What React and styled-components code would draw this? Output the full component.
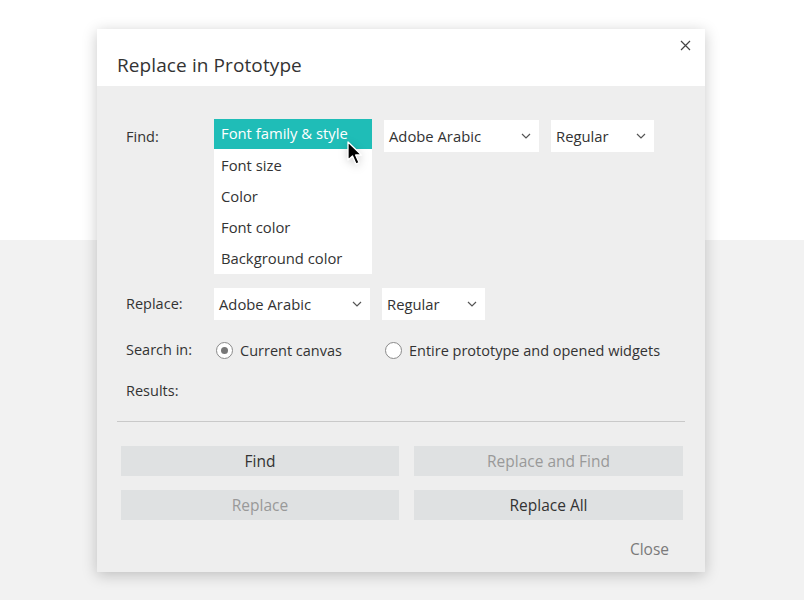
import React from "react";
import styled, { createGlobalStyle } from "styled-components";

const GlobalStyle = createGlobalStyle`
  html, body {
    margin: 0;
    padding: 0;
  }
  body {
    font-family: "Open Sans", "Liberation Sans", sans-serif;
    color: #333;
    background: linear-gradient(to bottom, #fff 0, #fff 240px, #f2f2f2 240px);
    min-height: 600px;
  }
`;

const Page = styled.div`
  width: 804px;
  height: 600px;
  display: flex;
  justify-content: flex-start;
  padding: 29px 0 0 97px;
  box-sizing: border-box;
`;

const Dialog = styled.div`
  width: 608px;
  height: 543px;
  background: #eeeeee;
  box-shadow: 0 3px 14px rgba(0, 0, 0, 0.22);
  display: flex;
  flex-direction: column;
  position: relative;
`;

const Header = styled.div`
  height: 57px;
  background: #fff;
  display: flex;
  align-items: flex-end;
  padding: 0 20px 8px 20px;
  box-sizing: border-box;
`;

const Title = styled.h2`
  margin: 0;
  font-size: 19px;
  font-weight: 400;
  color: #333;
  letter-spacing: 0.1px;
`;

const CloseX = styled.button`
  position: absolute;
  top: 8px;
  right: 12px;
  width: 16px;
  height: 16px;
  padding: 0;
  border: 0;
  background: transparent;
  display: flex;
  align-items: center;
  justify-content: center;
`;

const Body = styled.div`
  flex: 1;
  padding: 33px 20px 11px 20px;
  display: flex;
  flex-direction: column;
`;

const Row = styled.div`
  display: flex;
  align-items: ${(p) => (p.top ? "flex-start" : "center")};
  padding-left: 9px;
  margin-top: ${(p) => p.mt || 0}px;
  height: ${(p) => p.h}px;
`;

const Label = styled.div`
  width: 88px;
  flex: none;
  font-size: 14.5px;
  line-height: ${(p) => p.lh || 24}px;
  padding-top: ${(p) => p.pt || 0}px;
  color: #333;
`;

const Controls = styled.div`
  display: flex;
  align-items: flex-start;
  gap: ${(p) => p.gap || 12}px;
`;

const Menu = styled.ul`
  list-style: none;
  margin: 0;
  padding: 0;
  width: 158px;
  background: #fff;
  position: relative;
`;

const MenuItem = styled.li`
  height: 31px;
  line-height: ${(p) => (p.active ? 29 : 31)}px;
  padding-left: 7px;
  font-size: 14.8px;
  color: ${(p) => (p.active ? "#fff" : "#333")};
  background: ${(p) => (p.active ? "#1fbdb7" : "transparent")};
  ${(p) => p.active && "height: 30px; margin-bottom: 1px;"}
`;

const Cursor = styled.svg`
  position: absolute;
  left: 133px;
  top: 22px;
  filter: drop-shadow(0 2px 4px rgba(0, 0, 0, 0.18));
`;

const Select = styled.div`
  width: ${(p) => p.w}px;
  height: 32px;
  background: #fff;
  display: flex;
  align-items: center;
  justify-content: space-between;
  padding: 0 8px 0 5px;
  box-sizing: border-box;
  font-size: 14.8px;
  color: #333;
  margin-top: ${(p) => p.mt || 0}px;
`;

const Radio = styled.label`
  display: flex;
  align-items: center;
  gap: 7px;
  font-size: 14.5px;
  color: #333;
  margin-right: ${(p) => p.mr || 0}px;
`;

const RadioDot = styled.span`
  width: 15px;
  height: 15px;
  border-radius: 50%;
  border: 1px solid #8a8a8a;
  background: #fff;
  display: flex;
  align-items: center;
  justify-content: center;
  &::after {
    content: "";
    width: 7px;
    height: 7px;
    border-radius: 50%;
    background: ${(p) => (p.checked ? "#777" : "transparent")};
  }
`;

const RadioGroup = styled.div`
  display: flex;
  align-items: center;
  padding-left: 2px;
`;

const Divider = styled.div`
  height: 1px;
  background: #c9c9c9;
  margin-top: 18px;
`;

const Buttons = styled.div`
  display: grid;
  grid-template-columns: 278px 269px;
  column-gap: 15px;
  row-gap: 14px;
  margin-top: 24px;
  padding-left: 4px;
`;

const Button = styled.button`
  height: 30px;
  border: 0;
  background: #dfe1e2;
  font-family: "Open Sans", "Liberation Sans", sans-serif;
  font-size: 15.5px;
  color: ${(p) => (p.disabled ? "#999" : "#333")};
  padding: 0;
`;

const Footer = styled.div`
  margin-top: 17px;
  display: flex;
  justify-content: flex-end;
  padding-right: 16px;
`;

const CloseLink = styled.span`
  font-size: 15.5px;
  line-height: 24px;
  color: #7a7a7a;
`;

const Chevron = () => (
  <svg width="10" height="6" viewBox="0 0 10 6">
    <path d="M1 1 L5 5 L9 1" fill="none" stroke="#555" strokeWidth="1.2" />
  </svg>
);

export default function App() {
  return (
    <>
      <GlobalStyle />
      <Page>
        <Dialog>
          <Header>
            <Title>Replace in Prototype</Title>
          </Header>
          <CloseX aria-label="close">
            <svg width="11" height="11" viewBox="0 0 11 11">
              <path d="M1 1 L10 10 M10 1 L1 10" stroke="#444" strokeWidth="1.2" />
            </svg>
          </CloseX>
          <Body>
            <Row top h={155}>
              <Label lh={32} pt={2}>Find:</Label>
              <Controls>
                <Menu>
                  <MenuItem active>Font family &amp; style</MenuItem>
                  <MenuItem>Font size</MenuItem>
                  <MenuItem>Color</MenuItem>
                  <MenuItem>Font color</MenuItem>
                  <MenuItem>Background color</MenuItem>
                  <Cursor width="16" height="26" viewBox="0 0 16 26">
                    <path
                      d="M1 1 L1 19 L5.5 15 L9 23 L12 21.6 L8.6 14 L14.5 14 Z"
                      fill="#000"
                      stroke="#fff"
                      strokeWidth="1.3"
                      strokeLinejoin="round"
                    />
                  </Cursor>
                </Menu>
                <Select w={155} mt={1}>
                  Adobe Arabic <Chevron />
                </Select>
                <Select w={103} mt={1}>
                  Regular <Chevron />
                </Select>
              </Controls>
            </Row>
            <Row h={32} mt={14}>
              <Label>Replace:</Label>
              <Controls>
                <Select w={156}>
                  Adobe Arabic <Chevron />
                </Select>
                <Select w={103}>
                  Regular <Chevron />
                </Select>
              </Controls>
            </Row>
            <Row h={24} mt={18}>
              <Label>Search in:</Label>
              <RadioGroup>
                <Radio mr={43}>
                  <RadioDot checked />
                  Current canvas
                </Radio>
                <Radio>
                  <RadioDot />
                  Entire prototype and opened widgets
                </Radio>
              </RadioGroup>
            </Row>
            <Row h={24} mt={17}>
              <Label>Results:</Label>
            </Row>
            <Divider />
            <Buttons>
              <Button>Find</Button>
              <Button disabled>Replace and Find</Button>
              <Button disabled>Replace</Button>
              <Button>Replace All</Button>
            </Buttons>
            <Footer>
              <CloseLink>Close</CloseLink>
            </Footer>
          </Body>
        </Dialog>
      </Page>
    </>
  );
}
